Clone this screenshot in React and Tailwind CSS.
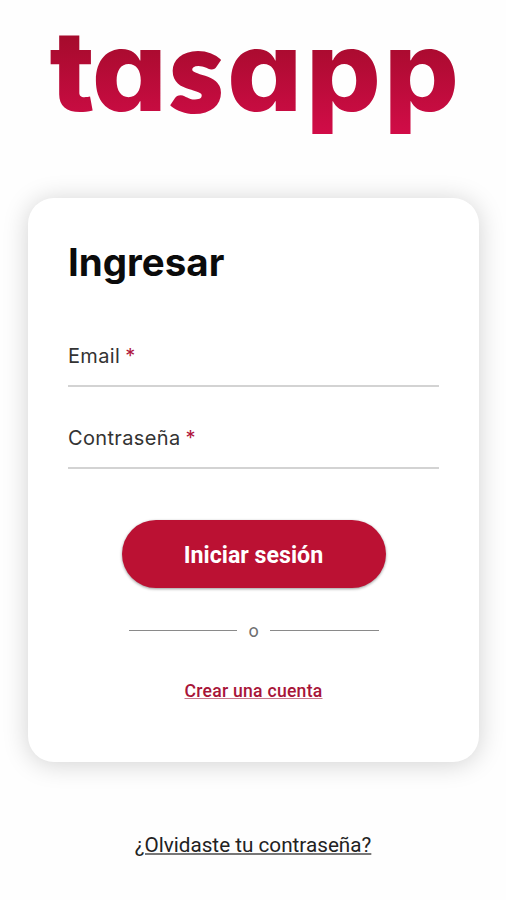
import { useState } from 'react';

function Logo() {
  return (
    <svg className="block h-[150px] w-full" viewBox="0 0 506 150" role="img">
      <defs>
        <linearGradient id="brand" gradientUnits="userSpaceOnUse" x1="0" y1="35" x2="0" y2="136">
          <stop offset="0" stopColor="#a50b2c" />
          <stop offset="1" stopColor="#d20c48" />
        </linearGradient>
      </defs>
      <text
        y="111.3"
        fill="url(#brand)"
        transform="scale(1.055 1)"
        className="font-['Inter',sans-serif] text-[112px] font-extrabold [font-feature-settings:'cv11']"
      >
        <tspan x="47">t</tspan>
        <tspan x="87">a</tspan>
        <tspan
          x="161.5"
          stroke="url(#brand)"
          strokeWidth="4"
          className="font-['Lato',sans-serif] text-[111px] font-black"
        >
          s
        </tspan>
        <tspan x="215.2">a</tspan>
        <tspan x="289.8">p</tspan>
        <tspan x="363.8">p</tspan>
      </text>
    </svg>
  );
}

function Field({ label, type, value, onChange }) {
  return (
    <label className="relative block h-[82px]">
      <span className="block pt-[17px] text-[20px] leading-6 tracking-[0.35px] text-[#333]">
        {label} <span className="-ml-px text-[#b0163c]">*</span>
      </span>
      <input
        type={type}
        value={value}
        onChange={onChange}
        className="absolute inset-x-0 top-0 h-[60px] w-full border-b-2 border-[#d3d3d3] bg-transparent pt-4 text-[20px] outline-none"
      />
    </label>
  );
}

export default function App() {
  const [email, setEmail] = useState('');
  const [password, setPassword] = useState('');

  return (
    <div className="flex h-[900px] w-full flex-col items-center overflow-hidden bg-[#fefefe] font-['Inter',sans-serif]">
      <Logo />

      {/* Login card */}
      <div className="mt-[48px] mr-[-1px] flex h-[564px] w-[451px] shrink-0 flex-col rounded-[26px] bg-white px-10 shadow-[0_2px_26px_rgba(0,0,0,0.18)]">
        <h1 className="mt-[40px] text-[38.5px] leading-[48px] font-bold text-[#0b0b0b]">
          Ingresar
        </h1>

        <form className="mt-[41px] flex flex-col" onSubmit={(e) => e.preventDefault()}>
          <Field label="Email" type="email" value={email} onChange={(e) => setEmail(e.target.value)} />
          <Field
            label="Contraseña"
            type="password"
            value={password}
            onChange={(e) => setPassword(e.target.value)}
          />
          <button
            type="submit"
            className="mt-[29px] h-[68px] w-[264px] self-center rounded-full bg-[#bb1133] pt-[3px] font-['Roboto',sans-serif] text-[23.2px] font-bold text-white shadow-[0_1px_3px_rgba(0,0,0,0.4)]"
          >
            Iniciar sesión
          </button>
        </form>

        <div className="mt-[30px] flex h-6 w-[250px] items-center gap-[11px] self-center font-['Roboto',sans-serif] text-[18px] text-[#6f6f6f]">
          <span className="h-px flex-1 bg-[#8a8a8a]" />
          <span>o</span>
          <span className="h-px flex-1 bg-[#8a8a8a]" />
        </div>

        <a
          href="#"
          className="mt-[37px] self-center font-['Roboto',sans-serif] text-[17.6px] leading-6 font-medium tracking-[0.25px] text-[#a81438] underline decoration-[#c8788c] underline-offset-1"
        >
          Crear una cuenta
        </a>
      </div>

      <a
        href="#"
        className="mt-[69px] font-['Roboto',sans-serif] text-[20.7px] leading-7 text-[#222] underline decoration-[#777] underline-offset-1"
      >
        ¿Olvidaste tu contraseña?
      </a>
    </div>
  );
}
